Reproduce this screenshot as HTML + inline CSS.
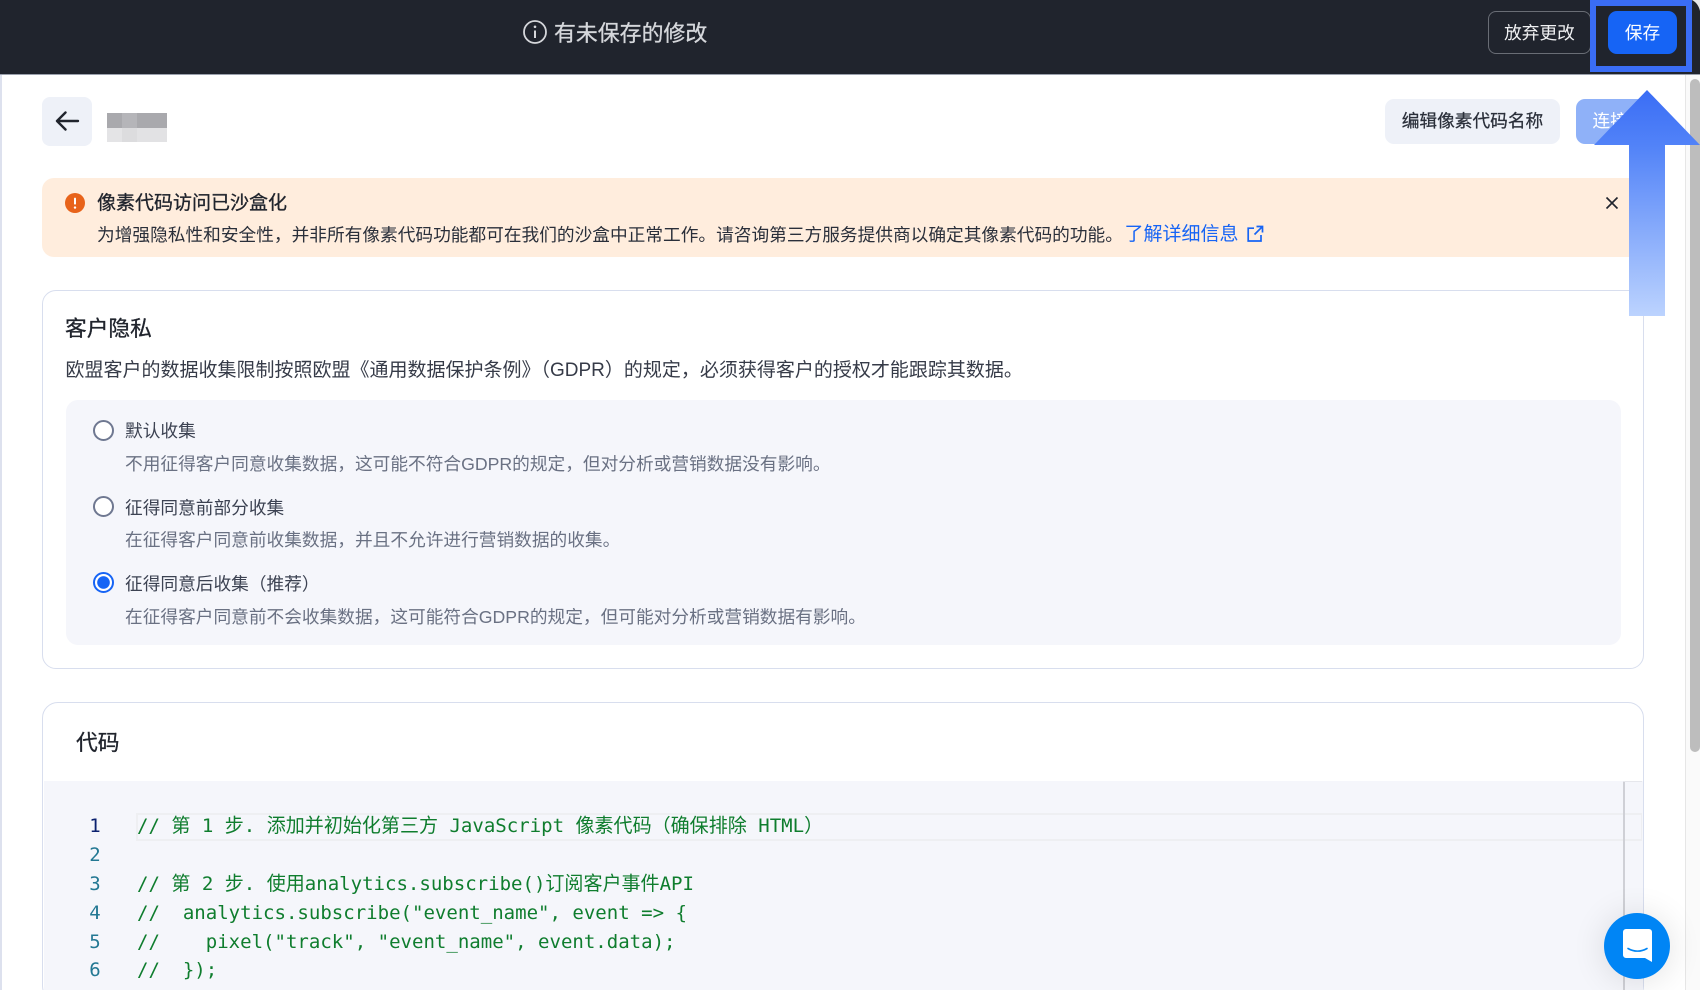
<!DOCTYPE html>
<html lang="zh"><head><meta charset="utf-8"><title>像素代码</title>
<style>
*{box-sizing:border-box}
html,body{margin:0;padding:0;width:1700px;height:990px;overflow:hidden;background:#fff}
body{position:relative;font-family:"Liberation Sans","Noto Sans CJK SC",sans-serif;color:#20242d}
.a{position:absolute;white-space:nowrap}
.t{position:absolute;white-space:nowrap;line-height:30px;height:30px}
.lbl{font-size:17.7px;color:#3c4252;left:125px}
.sub{font-size:17.7px;color:#6a7183;left:125px}
.radio{position:absolute;left:93px;width:21px;height:21px;border-radius:50%;border:2.5px solid #6f7891;background:#fff}
.code{position:absolute;left:137px;font-family:"DejaVu Sans Mono","Noto Sans CJK SC",monospace;font-size:19.05px;line-height:29px;height:29px;color:#0f7d2e;white-space:pre}
.n{position:absolute;left:84px;width:22px;text-align:center;font-family:"DejaVu Sans Mono",monospace;font-size:19px;line-height:29px;height:29px;color:#237893}
</style></head><body>

<!-- top bar -->
<div class="a" style="left:0;top:0;width:1700px;height:74px;background:#20242d"></div>
<div class="a" style="left:0;top:74px;width:1700px;height:1px;background:#9aa0ac"></div>
<svg class="a" style="left:1692px;top:0" width="8" height="11"><path d="M0 0H8V11C7 6 4 2 0 0Z" fill="#e8e8e8"/></svg>
<svg class="a" style="left:522px;top:19px" width="26" height="26" viewBox="0 0 26 26"><circle cx="13" cy="13" r="11" fill="none" stroke="#d5d7db" stroke-width="1.8"/><path d="M13 11.5V19" stroke="#d5d7db" stroke-width="2"/><circle cx="13" cy="7.8" r="1.3" fill="#d5d7db"/></svg>
<div class="t" style="left:554px;top:18.5px;font-size:21.9px;color:#d5d7db;-webkit-text-stroke:.3px #d5d7db">有未保存的修改</div>

<div class="a" style="left:1488px;top:11px;width:103px;height:43px;border:1.5px solid #696d75;border-radius:8px;color:#f0f1f3;font-size:17.7px;line-height:42px;text-align:center">放弃更改</div>
<div class="a" style="left:1608px;top:11px;width:69px;height:43px;background:#1664f5;border-radius:9px;color:#fff;font-size:17.7px;line-height:45px;text-align:center">保存</div>
<div class="a" style="left:1590px;top:0;width:102px;height:72px;border:6px solid #3a6df5"></div>

<!-- page edges -->
<div class="a" style="left:0;top:75px;width:2px;height:915px;background:#dde1ee"></div>
<div class="a" style="left:1685px;top:75px;width:15px;height:915px;background:#fafafa;border-left:1.5px solid #e6e6e6"></div>
<div class="a" style="left:1690px;top:79px;width:10px;height:673px;background:#bdbdbd;border-radius:5px"></div>

<!-- header row -->
<div class="a" style="left:42px;top:97px;width:50px;height:49px;background:#eef1f8;border-radius:8px"></div>
<svg class="a" style="left:54px;top:109px" width="26" height="24" viewBox="0 0 26 24"><path d="M24 12H3.5M11.5 3.5L3 12l8.5 8.5" fill="none" stroke="#20242d" stroke-width="2.4" stroke-linecap="round" stroke-linejoin="round"/></svg>
<svg class="a" style="left:107px;top:113px" width="60" height="29"><rect width="15" height="15" fill="#a9a9ad"/><rect x="15" width="15" height="15" fill="#b5b5b9"/><rect x="30" width="30" height="15" fill="#a9a9ad"/><rect y="15" width="15" height="14" fill="#e4e4e6"/><rect x="15" y="15" width="15" height="14" fill="#dcdcde"/><rect x="30" y="15" width="30" height="14" fill="#e2e2e4"/></svg>

<div class="a" style="left:1385px;top:99px;width:175px;height:45px;background:#eef1f8;border-radius:9px;font-size:17.7px;line-height:44px;text-align:center;color:#2a2f3a;-webkit-text-stroke:.25px #2a2f3a">编辑像素代码名称</div>
<div class="a" style="left:1576px;top:99px;width:70px;height:45px;background:#8fb1f8;border-radius:9px;font-size:17.7px;line-height:44px;color:#fff;padding-left:16.5px">连接</div>

<!-- banner -->
<div class="a" style="left:42px;top:178px;width:1602px;height:79px;background:#ffeddd;border-radius:12px"></div>
<svg class="a" style="left:65px;top:193px" width="20" height="20" viewBox="0 0 20 20"><circle cx="10" cy="10" r="10" fill="#e8631a"/><rect x="9" y="4.6" width="2" height="7" rx="1" fill="#fff"/><circle cx="10" cy="14.6" r="1.2" fill="#fff"/></svg>
<div class="t" style="left:97px;top:189px;font-size:19px;color:#20242d;-webkit-text-stroke:.3px #20242d">像素代码访问已沙盒化</div>
<div class="t" style="left:97px;top:219.5px;font-size:17.7px;color:#2a2f3a">为增强隐私性和安全性，并非所有像素代码功能都可在我们的沙盒中正常工作。请咨询第三方服务提供商以确定其像素代码的功能。</div>
<div class="t" style="left:1124.5px;top:220px;font-size:19px;color:#1664f5">了解详细信息</div>
<svg class="a" style="left:1245.5px;top:225px" width="18" height="18" viewBox="0 0 18 18"><path d="M8 3.2H2.2V16H15V10M10.5 1.5H16.5V7.5M16.3 1.7L8.5 9.5" fill="none" stroke="#1664f5" stroke-width="1.7"/></svg>
<svg class="a" style="left:1605px;top:196px" width="14" height="14" viewBox="0 0 14 14"><path d="M1.5 1.5L12.5 12.5M12.5 1.5L1.5 12.5" stroke="#20242d" stroke-width="1.6"/></svg>

<!-- privacy card -->
<div class="a" style="left:42px;top:290px;width:1602px;height:379px;border:1.5px solid #d8deee;border-radius:14px"></div>
<div class="t" style="left:65px;top:314px;font-size:21.7px;color:#20242d;-webkit-text-stroke:.3px #20242d">客户隐私</div>
<div class="t" style="left:65.5px;top:356px;font-size:19px;color:#363b48">欧盟客户的数据收集限制按照欧盟《通用数据保护条例》（GDPR）的规定，必须获得客户的授权才能跟踪其数据。</div>
<div class="a" style="left:66px;top:400px;width:1555px;height:245px;background:#f5f6fb;border-radius:12px"></div>

<div class="radio" style="top:420px"></div>
<div class="t lbl" style="top:415.5px">默认收集</div>
<div class="t sub" style="top:449px">不用征得客户同意收集数据，这可能不符合GDPR的规定，但对分析或营销数据没有影响。</div>
<div class="radio" style="top:496px"></div>
<div class="t lbl" style="top:492.5px">征得同意前部分收集</div>
<div class="t sub" style="top:525px">在征得客户同意前收集数据，并且不允许进行营销数据的收集。</div>
<div class="radio" style="top:572px;border-color:#1664f5;background:radial-gradient(circle,#1664f5 0 6px,#fff 6.6px)"></div>
<div class="t lbl" style="top:569px">征得同意后收集（推荐）</div>
<div class="t sub" style="top:602px">在征得客户同意前不会收集数据，这可能符合GDPR的规定，但可能对分析或营销数据有影响。</div>

<!-- code card -->
<div class="a" style="left:42px;top:702px;width:1602px;height:300px;border:1.5px solid #d8deee;border-radius:16px"></div>
<div class="t" style="left:76px;top:728px;font-size:21.7px;color:#20242d;-webkit-text-stroke:.3px #20242d">代码</div>
<div class="a" style="left:44px;top:781px;width:1599px;height:209px;background:#f5f6fb"></div>
<div class="a" style="left:136px;top:813px;width:1506px;height:28px;border:2px solid #eeeff2;border-right-width:1px"></div>
<div class="a" style="left:1623px;top:781px;width:1.5px;height:209px;background:#cfd0d6"></div>
<div class="a" style="left:1623px;top:781px;width:19px;height:1px;background:#e6e7ec"></div>

<div class="n" style="top:812px;color:#0b216f">1</div>
<div class="n" style="top:841px">2</div>
<div class="n" style="top:870px">3</div>
<div class="n" style="top:899px">4</div>
<div class="n" style="top:927.5px">5</div>
<div class="n" style="top:956px">6</div>
<div class="code" style="top:812px">// 第 1 步. 添加并初始化第三方 JavaScript 像素代码（确保排除 HTML）</div>
<div class="code" style="top:870px">// 第 2 步. 使用analytics.subscribe()订阅客户事件API</div>
<div class="code" style="top:899px">//  analytics.subscribe("event_name", event =&gt; {</div>
<div class="code" style="top:927.5px">//    pixel("track", "event_name", event.data);</div>
<div class="code" style="top:956px">//  });</div>

<!-- annotation arrow -->
<svg class="a" style="left:1594px;top:90px" width="106" height="226" viewBox="0 0 106 226">
<defs><linearGradient id="g" gradientUnits="userSpaceOnUse" x1="0" y1="0" x2="0" y2="226"><stop offset="0" stop-color="#3a6df5"/><stop offset=".25" stop-color="#5283f8"/><stop offset="1" stop-color="#bcd3fe"/></linearGradient></defs>
<path d="M53 0L106 55H71V226H35V55H0Z" fill="url(#g)"/></svg>

<!-- chat launcher -->
<div class="a" style="left:1604px;top:913px;width:66px;height:66px;border-radius:50%;background:#0085f5;box-shadow:0 2px 34px rgba(0,0,0,.12)"></div>
<svg class="a" style="left:1622px;top:928px" width="31" height="35" viewBox="0 0 31 35"><path d="M4 1H27a3 3 0 0 1 3 3V34L23 30H4a3 3 0 0 1-3-3V4a3 3 0 0 1 3-3Z" fill="#fff"/><path d="M6 20.5C12 24 19 24 25 20.5" fill="none" stroke="#0085f5" stroke-width="1.6" stroke-linecap="round"/></svg>

</body></html>
